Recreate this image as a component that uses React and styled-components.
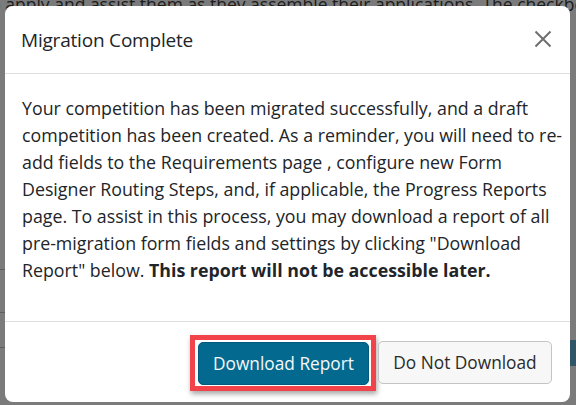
import React from 'react';
import styled, { createGlobalStyle } from 'styled-components';

const GlobalStyle = createGlobalStyle`
  html, body {
    margin: 0;
    padding: 0;
    background: #7b7b7b;
  }
  body {
    font-family: "Open Sans", "Liberation Sans", sans-serif;
  }
`;

const Page = styled.div`
  position: relative;
  width: 576px;
  height: 405px;
  overflow: hidden;
  background: #7b7b7b;
`;

const BackdropText = styled.p`
  margin: -10px 0 0 -16px;
  width: 640px;
  white-space: nowrap;
  font-size: 17.5px;
  line-height: 28px;
  color: #1c1c1c;
`;

const BackdropRule = styled.div`
  height: 1px;
  width: 8px;
  margin-top: ${p => p.gap}px;
  background: #5e5e5e;
`;

const BackdropButton = styled.div`
  position: absolute;
  right: 0;
  top: 340px;
  width: 6px;
  height: 26px;
  background: #2f5566;
`;

const Modal = styled.div`
  position: absolute;
  top: 6px;
  left: 5px;
  width: 565px;
  height: 396px;
  background: #fff;
  border-radius: 8px;
  display: flex;
  flex-direction: column;
`;

const Header = styled.div`
  height: 68px;
  display: flex;
  align-items: center;
  justify-content: space-between;
  padding: 0 16px 0 16px;
  border-bottom: 1px solid #dedede;
  box-sizing: border-box;
`;

const Title = styled.h5`
  margin: 0;
  font-size: 19px;
  letter-spacing: -0.2px;
  font-weight: 500;
  color: #212529;
  padding-top: 1px;
`;

const CloseButton = styled.button`
  border: none;
  background: none;
  padding: 0;
  width: 20px;
  height: 20px;
  display: flex;
  align-items: center;
  justify-content: center;
  cursor: pointer;
  margin-right: 1px;
  margin-bottom: 2px;
`;

const Body = styled.div`
  padding: 21px 7px 0 17px;
  flex: 1;
  border-bottom: 1px solid #dedede;
`;

const Message = styled.p`
  margin: 0;
  font-size: 17.8px;
  line-height: 27px;
  color: #212529;

  strong {
    font-weight: 700;
  }
`;

const Footer = styled.div`
  height: 80px;
  display: flex;
  align-items: center;
  justify-content: flex-end;
  padding: 0 18px 0 0;
  gap: 2px;
`;

const Highlight = styled.span`
  display: inline-flex;
  padding: 2px 2px 1px 3px;
  border: 5px solid #f2434a;
  box-shadow: 1px 3px 5px rgba(0, 0, 0, 0.35);
  margin-top: 1px;
`;

const Button = styled.button`
  height: 43px;
  padding: 0;
  border-radius: 5px;
  font-family: "Open Sans", "Liberation Sans", sans-serif;
  font-size: 17.3px;
  cursor: pointer;
  border: 1px solid ${p => (p.primary ? '#03587b' : '#c4c4c4')};
  background: ${p => (p.primary ? '#04698f' : '#f7f7f7')};
  color: ${p => (p.primary ? '#f4f8fa' : '#2a2a2a')};
  width: ${p => p.w}px;
`;

export default function App() {
  return (
    <Page>
      <GlobalStyle />
      <BackdropText>
        to apply and assist them as they assemble their applications. The checkbox
        <br />
        y&nbsp;&nbsp;&nbsp;&nbsp;&nbsp;&nbsp;&nbsp;&nbsp;&nbsp;&nbsp;&nbsp;&nbsp;&nbsp;&nbsp;&nbsp;&nbsp;&nbsp;&nbsp;&nbsp;&nbsp;&nbsp;&nbsp;&nbsp;&nbsp;&nbsp;&nbsp;&nbsp;&nbsp;&nbsp;&nbsp;&nbsp;&nbsp;&nbsp;&nbsp;&nbsp;&nbsp;&nbsp;&nbsp;&nbsp;&nbsp;&nbsp;&nbsp;&nbsp;&nbsp;&nbsp;&nbsp;&nbsp;&nbsp;&nbsp;&nbsp;&nbsp;&nbsp;&nbsp;&nbsp;&nbsp;&nbsp;&nbsp;&nbsp;&nbsp;&nbsp;&nbsp;&nbsp;&nbsp;&nbsp;&nbsp;&nbsp;&nbsp;&nbsp;&nbsp;&nbsp;&nbsp;&nbsp;&nbsp;&nbsp;&nbsp;&nbsp;&nbsp;&nbsp;&nbsp;&nbsp;&nbsp;&nbsp;&nbsp;&nbsp;&nbsp;&nbsp;&nbsp;&nbsp;&nbsp;&nbsp;&nbsp;&nbsp;&nbsp;&nbsp;&nbsp;&nbsp;&nbsp;&nbsp;&nbsp;&nbsp;&nbsp;&nbsp;&nbsp;&nbsp;&nbsp;&nbsp;&nbsp;&nbsp;&nbsp;&nbsp;&nbsp;&nbsp;&nbsp;&nbsp;&nbsp;&nbsp;&nbsp;&nbsp;&nbsp;&nbsp;&nbsp;&nbsp;&nbsp;&nbsp;&nbsp;&nbsp;&nbsp;&nbsp;&nbsp;&nbsp;u
      </BackdropText>
      <BackdropRule gap={223} />
      <BackdropRule gap={42} />
      <BackdropRule gap={34} />
      <BackdropButton />
      <Modal role="dialog">
        <Header>
          <Title>Migration Complete</Title>
          <CloseButton aria-label="Close">
            <svg width="18" height="18" viewBox="0 0 18 18">
              <path d="M1.5 1.5 L16.5 16.5 M16.5 1.5 L1.5 16.5" stroke="#6f6f6f" strokeWidth="2" />
            </svg>
          </CloseButton>
        </Header>
        <Body>
          <Message>
            Your competition has been migrated successfully, and a draft competition has been
            created. As a reminder, you will need to re-add fields to the Requirements page ,
            configure new Form Designer Routing Steps, and, if applicable, the Progress Reports
            page. To assist in this process, you may download a report of all pre-migration form
            fields and settings by clicking "Download Report" below.{' '}
            <strong>This report will not be accessible later.</strong>
          </Message>
        </Body>
        <Footer>
          <Highlight>
            <Button primary w={171}>Download Report</Button>
          </Highlight>
          <Button w={174}>Do Not Download</Button>
        </Footer>
      </Modal>
    </Page>
  );
}
